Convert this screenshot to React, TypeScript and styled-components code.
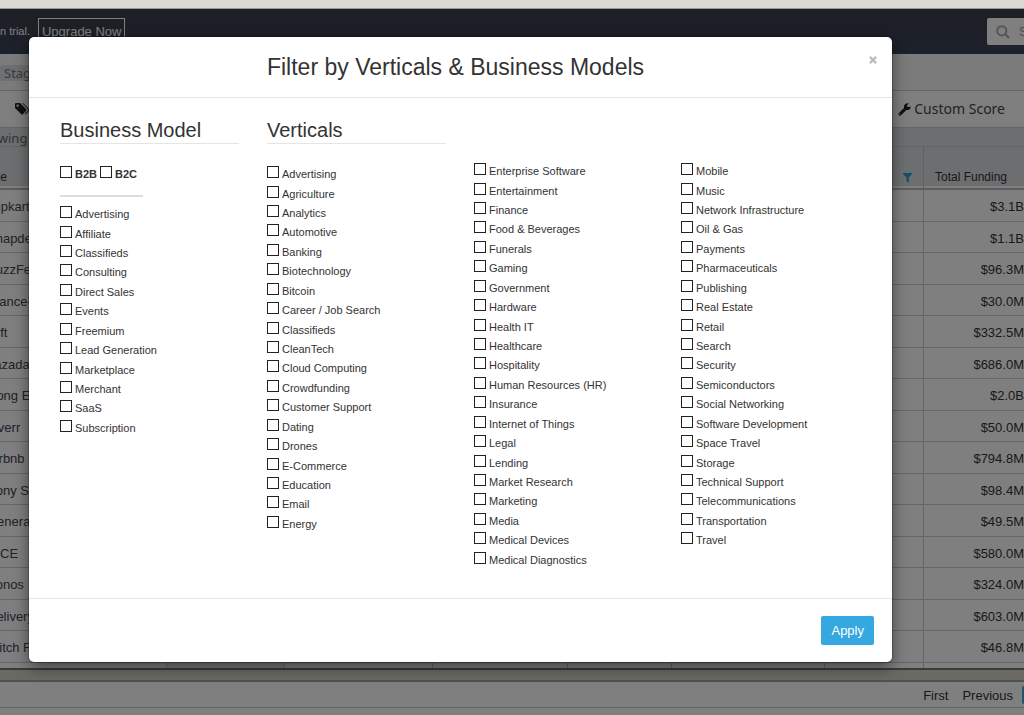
import React from "react";
import styled, { createGlobalStyle } from "styled-components";

const GlobalStyle = createGlobalStyle`
  * { box-sizing: border-box; }
  html, body, #root { height: 100%; }
  body {
    margin: 0;
    overflow: hidden;
    background: #fff;
    font-family: "Liberation Sans", Arial, Helvetica, sans-serif;
    font-size: 12px;
    color: #333;
  }
`;

const Screen = styled.div`
  position: relative;
  display: flex;
  flex-direction: column;
  height: 100vh;
  overflow: hidden;
`;

const WindowEdge = styled.div`
  flex: none;
  height: 9px;
  background: #dcdad5;
  border-bottom: 1px solid #9c988e;
`;

const Page = styled.div`
  position: relative;
  flex: 1;
  display: flex;
  flex-direction: column;
  min-height: 0;
  overflow: hidden;
`;

const NavBar = styled.header`
  flex: none;
  display: flex;
  align-items: flex-start;
  height: 45px;
  padding-top: 9px;
  background: linear-gradient(#393e48, #3b4358);
  color: #fff;
`;

const TrialText = styled.span`
  padding-top: 6px;
  margin-right: 8px;
  font-size: 11px;
  line-height: 15px;
`;

const UpgradeButton = styled.button`
  height: 28px;
  padding: 0 3px;
  border: 1px solid #fff;
  background: none;
  color: #fff;
  font: 13px/26px "Liberation Sans", Arial, sans-serif;
`;

const SearchBox = styled.label`
  display: flex;
  align-items: center;
  gap: 9px;
  width: 37px;
  height: 27px;
  margin-left: auto;
  padding-left: 9px;
  overflow: hidden;
  border-radius: 2px 0 0 2px;
  background: #fff;
`;

const SearchInput = styled.input`
  width: 120px;
  flex: none;
  padding: 0;
  border: 0;
  background: none;
  font: 13px "Liberation Sans", Arial, sans-serif;
  &::placeholder { color: #999; opacity: 1; }
`;

const TagBar = styled.div`
  flex: none;
  height: 37px;
  padding-top: 11px;
  background: #f6f6f6;
  border-bottom: 1px solid #c9c9c9;
`;

const Tag = styled.span`
  display: inline-block;
  padding: 0 4px;
  border-radius: 3px;
  background: #dcdfe4;
  color: #777;
  font: 13px/16px "Noto Sans", sans-serif;
`;

const ToolBar = styled.div`
  flex: none;
  display: flex;
  align-items: center;
  justify-content: space-between;
  height: 37px;
  padding: 0 19px 0 14px;
  background: #fcfcfc;
  border-bottom: 1px solid #c6c8cb;
`;

const ToolButton = styled.button`
  display: flex;
  align-items: center;
  gap: 3px;
  padding: 0;
  border: 0;
  background: none;
  color: #444;
  font: 14px/16px "Noto Sans", sans-serif;
`;

const StatusBar = styled.div`
  flex: none;
  height: 19px;
  margin-left: -25px;
  background: #d9dce1;
  border-bottom: 1px solid #c4c8cd;
  color: #666;
  font: 13px/20px "Noto Sans", sans-serif;
`;

/* The grid is scrolled sideways, so its first column starts past the left edge. */
const GridArea = styled.main`
  flex: 1;
  min-height: 0;
  margin-left: -25px;
  overflow: hidden;
`;

const DataTable = styled.table`
  width: 100%;
  border-collapse: separate;
  border-spacing: 0;
  table-layout: fixed;
`;

const HeadCell = styled.th`
  height: 43px;
  padding: 21px 11px 0 0;
  border-right: 1px solid #c0c3c8;
  border-bottom: 2px solid #b8b8b8;
  background: linear-gradient(#d9dce1 39px, #fff 39px);
  color: #333;
  font-weight: normal;
  line-height: 18px;
  text-align: left;
  white-space: nowrap;
  vertical-align: top;
  &:last-child { padding-left: 11px; padding-right: 0; border-right: 0; }
  svg { display: block; margin: 5px 0 0 auto; }
`;

const BodyRow = styled.tr`
  height: 32px;
  &:nth-child(even) { height: 31px; }
`;

const Cell = styled.td<{ $shaded?: boolean; $number?: boolean }>`
  padding: 2px 0 0;
  overflow: hidden;
  border-right: 1px solid #c8c8c8;
  border-bottom: 1px solid #cccccc;
  background: ${(p) => (p.$shaded ? "#f2f2f4" : "#fff")};
  color: ${(p) => (p.$number ? "#333" : "#41444f")};
  font-size: 13px;
  line-height: 15px;
  text-align: ${(p) => (p.$number ? "right" : "left")};
  white-space: nowrap;
  &:first-child { padding-left: 12px; }
  &:last-child { border-right: 0; }
`;

const ScrollTrack = styled.div`
  flex: none;
  height: 14px;
  background: #d5d2c9;
  border-top: 2px solid #77756f;
  border-bottom: 2px solid #a5a29a;
`;

const Pager = styled.nav`
  flex: none;
  display: flex;
  align-items: center;
  justify-content: flex-end;
  gap: 14px;
  height: 26px;
  border-bottom: 1px solid #c4c4c4;
`;

const PagerLink = styled.a`
  padding-top: 2px;
  color: #333;
  font-size: 13px;
  text-decoration: none;
`;

const CurrentPage = styled.span`
  width: 2px;
  height: 18px;
  margin-left: -5px;
  border-radius: 2px 0 0 2px;
  background: #35a8e0;
`;

const BottomEdge = styled.div`
  flex: none;
  height: 7px;
`;

const Backdrop = styled.div`
  position: absolute;
  inset: 0;
  padding: 28px 132px 0 29px;
  background: rgba(0, 0, 0, 0.5);
`;

const Dialog = styled.section`
  border-radius: 5px;
  background: #fff;
  box-shadow: 0 0 0 1px rgba(0, 0, 0, 0.2), 0 5px 15px rgba(0, 0, 0, 0.5);
`;

const DialogHeader = styled.header`
  display: flex;
  align-items: flex-start;
  height: 61px;
  padding: 15px 14px 0 14px;
  border-bottom: 1px solid #e5e5e5;
`;

const DialogTitle = styled.h2`
  flex: 1;
  margin: 0;
  font-size: 23px;
  font-weight: normal;
  line-height: 30px;
  text-align: center;
`;

const CloseButton = styled.button`
  width: 10px;
  height: 16px;
  padding: 0;
  border: 0;
  background: none;
  line-height: 0;
`;

const DialogBody = styled.div`
  display: grid;
  grid-template-columns: repeat(4, 1fr);
  height: 500px;
  padding: 22px 18px 0 17px;
`;

const Column = styled.fieldset`
  display: flex;
  flex-direction: column;
  min-width: 0;
  margin: 0;
  padding: 0 14px;
  border: 0;
`;

const ColumnTitle = styled.h3`
  height: 24px;
  margin: 0 0 20px;
  border-bottom: 1px solid #e5e5e5;
  font-size: 20px;
  font-weight: normal;
  line-height: 21px;
`;

const ContinuedColumn = styled(Column)`
  padding-top: 41px;
`;

const Options = styled.ul`
  display: grid;
  grid-auto-rows: 20px 19px 19px 20px 19px 20px 19px;
  margin: 0;
  padding: 0;
  list-style: none;
`;

const Option = styled.label<{ $bold?: boolean }>`
  display: flex;
  align-items: flex-start;
  gap: 3px;
  font-size: 11px;
  font-weight: ${(p) => (p.$bold ? "bold" : "normal")};
  line-height: 20px;
  white-space: nowrap;
`;

const CheckBox = styled.input`
  appearance: none;
  flex: none;
  width: 12px;
  height: 12px;
  margin: 2px 0 0;
  border: 1px solid #222;
  background: #fff;
`;

const Audience = styled.div`
  display: flex;
  gap: 3px;
`;

const Divider = styled.hr`
  width: 83px;
  height: 2px;
  margin: 11px 0 7px;
  border: 0;
  background: #ddd;
`;

const DialogFooter = styled.footer`
  display: flex;
  justify-content: flex-end;
  height: 64px;
  padding: 17px 18px 0;
  border-top: 1px solid #e5e5e5;
`;

const ApplyButton = styled.button`
  height: 29px;
  padding: 0 10px;
  border: 0;
  border-radius: 2px;
  background: #35a8e0;
  color: #fff;
  font: 13px/29px "Liberation Sans", Arial, sans-serif;
`;

const rows: [string, string][] = [
  ["Flipkart", "$3.1B"],
  ["Snapdeal", "$1.1B"],
  ["BuzzFeed", "$96.3M"],
  ["France-", "$30.0M"],
  ["Lyft", "$332.5M"],
  ["Lazada", "$686.0M"],
  ["Hong E", "$2.0B"],
  ["Fiverr", "$50.0M"],
  ["Airbnb", "$794.8M"],
  ["Sony S", "$98.4M"],
  ["Genera", "$49.5M"],
  ["NICE", "$580.0M"],
  ["Sonos", "$324.0M"],
  ["Delivery", "$603.0M"],
  ["Stitch Fix", "$46.8M"],
  ["", ""],
];

const businessModels = [
  "Advertising", "Affiliate", "Classifieds", "Consulting", "Direct Sales", "Events",
  "Freemium", "Lead Generation", "Marketplace", "Merchant", "SaaS", "Subscription",
];

const verticals = [
  [
    "Advertising", "Agriculture", "Analytics", "Automotive", "Banking", "Biotechnology",
    "Bitcoin", "Career / Job Search", "Classifieds", "CleanTech", "Cloud Computing",
    "Crowdfunding", "Customer Support", "Dating", "Drones", "E-Commerce", "Education",
    "Email", "Energy",
  ],
  [
    "Enterprise Software", "Entertainment", "Finance", "Food & Beverages", "Funerals",
    "Gaming", "Government", "Hardware", "Health IT", "Healthcare", "Hospitality",
    "Human Resources (HR)", "Insurance", "Internet of Things", "Legal", "Lending",
    "Market Research", "Marketing", "Media", "Medical Devices", "Medical Diagnostics",
  ],
  [
    "Mobile", "Music", "Network Infrastructure", "Oil & Gas", "Payments",
    "Pharmaceuticals", "Publishing", "Real Estate", "Retail", "Search", "Security",
    "Semiconductors", "Social Networking", "Software Development", "Space Travel",
    "Storage", "Technical Support", "Telecommunications", "Transportation", "Travel",
  ],
];

function OptionList({ items }: { items: string[] }) {
  return (
    <Options>
      {items.map((item) => (
        <li key={item}>
          <Option>
            <CheckBox type="checkbox" />
            {item}
          </Option>
        </li>
      ))}
    </Options>
  );
}

const SearchGlyph = styled.svg`
  flex: none;
`;

const SearchIcon = () => (
  <SearchGlyph width="14" height="14" viewBox="0 0 14 14" fill="none" stroke="#aaa" strokeWidth="2">
    <circle cx="5.8" cy="5.8" r="4.6" />
    <path d="M9.2 9.2 13 13" strokeWidth="2.4" />
  </SearchGlyph>
);

const TagsIcon = () => (
  <svg width="16" height="14" viewBox="0 0 16 14" fill="#222">
    <path fillRule="evenodd" d="M1 2Q1 1 2 1H6L12.4 7.3Q13 8 12.4 8.6L8.8 12.3Q8 13 7.3 12.3L1 6ZM3.6 2.4A1.2 1.2 0 1 0 3.6 4.8 1.2 1.2 0 1 0 3.6 2.4Z" />
    <path d="M8 1H9L15.4 7.3Q16 8 15.4 8.6L11.6 12.4 10.8 11.8 14 8.4Q14.4 7.9 14 7.3Z" />
  </svg>
);

const WrenchIcon = () => (
  <svg width="13" height="13" viewBox="0 0 13 13" fill="#222">
    <path fillRule="evenodd" d="M12.8 3.4Q12.4 7.4 8.4 7.1L3 12.2Q1.8 13.2 .8 12.2 -.2 11.2 .9 10.1L6 5Q5.5 1.2 9.2 .3L10.9 .4 9 2.2 9.3 3.8 10.9 4.1ZM1.9 10.5A.6.6 0 1 0 1.9 11.7.6.6 0 1 0 1.9 10.5Z" />
  </svg>
);

const FunnelIcon = () => (
  <svg width="9" height="10" viewBox="0 0 9 10" fill="#2b9fdc">
    <path d="M0 0H9V1L5.8 4.4V10L3.4 8V4.4L0 1Z" />
  </svg>
);

const CloseIcon = () => (
  <svg width="8" height="8" viewBox="0 0 8 8" stroke="#bdbdbd" strokeWidth="2.4">
    <path d="M.9 .9 7.1 7.1M7.1 .9 .9 7.1" />
  </svg>
);

const Col = styled.col<{ $width: string }>`
  width: ${(p) => p.$width};
`;

const columnWidths = ["192px", "118px", "148px", "135px", "104px", "153px", "99px", "auto"];

export default function App() {
  return (
    <Screen>
      <GlobalStyle />
      <WindowEdge />
      <Page>
        <NavBar>
          <TrialText>n trial.</TrialText>
          <UpgradeButton type="button">Upgrade Now</UpgradeButton>
          <SearchBox>
            <SearchIcon />
            <SearchInput type="text" placeholder="S" aria-label="Search" />
          </SearchBox>
        </NavBar>
        <TagBar>
          <Tag>Stag</Tag>
        </TagBar>
        <ToolBar>
          <ToolButton type="button" aria-label="Tags">
            <TagsIcon />
          </ToolButton>
          <ToolButton type="button">
            <WrenchIcon />
            Custom Score
          </ToolButton>
        </ToolBar>
        <StatusBar>Showing 1</StatusBar>
        <GridArea>
          <DataTable>
            <colgroup>
              {columnWidths.map((width, i) => (
                <Col key={i} $width={width} />
              ))}
            </colgroup>
            <thead>
              <tr>
                <HeadCell>Name</HeadCell>
                <HeadCell />
                <HeadCell />
                <HeadCell />
                <HeadCell />
                <HeadCell />
                <HeadCell>
                  <FunnelIcon />
                </HeadCell>
                <HeadCell>Total Funding</HeadCell>
              </tr>
            </thead>
            <tbody>
              {rows.map(([name, funding], i) => (
                <BodyRow key={i}>
                  <Cell>{name}</Cell>
                  <Cell $shaded />
                  <Cell />
                  <Cell />
                  <Cell />
                  <Cell />
                  <Cell />
                  <Cell $number>{funding}</Cell>
                </BodyRow>
              ))}
            </tbody>
          </DataTable>
        </GridArea>
        <ScrollTrack />
        <Pager>
          <PagerLink href="#first">First</PagerLink>
          <PagerLink href="#previous">Previous</PagerLink>
          <CurrentPage />
        </Pager>
        <BottomEdge />
        <Backdrop>
          <Dialog role="dialog" aria-labelledby="filter-title">
            <DialogHeader>
              <DialogTitle id="filter-title">Filter by Verticals &amp; Business Models</DialogTitle>
              <CloseButton type="button" aria-label="Close">
                <CloseIcon />
              </CloseButton>
            </DialogHeader>
            <DialogBody>
              <Column>
                <ColumnTitle>Business Model</ColumnTitle>
                <Audience>
                  <Option $bold>
                    <CheckBox type="checkbox" />
                    B2B
                  </Option>
                  <Option $bold>
                    <CheckBox type="checkbox" />
                    B2C
                  </Option>
                </Audience>
                <Divider />
                <OptionList items={businessModels} />
              </Column>
              <Column>
                <ColumnTitle>Verticals</ColumnTitle>
                <OptionList items={verticals[0]} />
              </Column>
              <ContinuedColumn>
                <OptionList items={verticals[1]} />
              </ContinuedColumn>
              <ContinuedColumn>
                <OptionList items={verticals[2]} />
              </ContinuedColumn>
            </DialogBody>
            <DialogFooter>
              <ApplyButton type="button">Apply</ApplyButton>
            </DialogFooter>
          </Dialog>
        </Backdrop>
      </Page>
    </Screen>
  );
}
